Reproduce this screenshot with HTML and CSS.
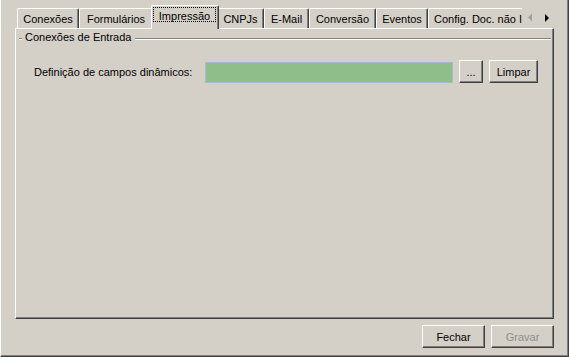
FILE: index.html
```html
<!DOCTYPE html>
<html lang="pt">
<head>
<meta charset="utf-8">
<title>Configurações</title>
<link rel="stylesheet" href="styles.css">
</head>
<body>
<div class="window">
  <div class="tabstrip">
    <div class="tabs">
      <div class="tab w-conexoes">Conexões</div>
      <div class="tab w-form">Formulários</div>
      <div class="tab tab-active"><span class="focus">Impressão</span></div>
      <div class="tab w-cnpj">CNPJs</div>
      <div class="tab w-email">E-Mail</div>
      <div class="tab w-conv">Conversão</div>
      <div class="tab w-event">Eventos</div>
      <div class="tab tab-last">Config. Doc. não Integrados</div>
    </div>
    <div class="scroller">
      <svg width="32" height="24" viewBox="0 0 32 24">
        <polygon points="6,12.5 10,8.5 10,16.5" fill="#a0a0a0"/>
        <polygon points="23,9 23,17 27,13" fill="#000"/>
      </svg>
    </div>
  </div>
  <div class="panel">
    <div class="group-head">
      <span class="etch dash"></span>
      <span class="group-title">Conexões de Entrada</span>
      <span class="etch fill"></span>
    </div>
    <div class="field-row">
      <span class="field-label">Definição de campos dinâmicos:</span>
      <div class="field-input"></div>
      <button class="btn btn-browse">...</button>
      <button class="btn btn-clear">Limpar</button>
    </div>
  </div>
  <div class="footer">
    <button class="btn btn-foot">Fechar</button>
    <button class="btn btn-foot btn-disabled">Gravar</button>
  </div>
</div>
</body>
</html>
```

FILE: styles.css
```css
* { box-sizing: border-box; }
html, body { margin: 0; }
body {
  background: #d4d0c8;
  font-family: "Liberation Sans", Arial, sans-serif;
  font-size: 11px;
  color: #000;
}
.window {
  width: 569px;
  height: 357px;
  border-left: 1px solid #fff;
  border-right: 1px solid #404040;
  border-bottom: 1px solid #404040;
  box-shadow: inset -1px -1px 0 #808080;
  padding: 5px 14px 0 14px;
  display: flex;
  flex-direction: column;
}
.tabstrip {
  display: flex;
  height: 24px;
  margin-left: 2px;
  margin-bottom: -1px;
  position: relative;
  z-index: 1;
  flex: none;
}
.tabs {
  display: flex;
  align-items: flex-end;
  width: 505px;
  height: 24px;
  overflow: hidden;
  flex: none;
}
.tab {
  flex: none;
  height: 20px;
  margin-bottom: 1px;
  border-top: 1px solid #fff;
  border-left: 1px solid #fff;
  border-right: 1px solid #404040;
  box-shadow: inset -1px 0 0 #808080;
  border-radius: 2px 2px 0 0;
  background: #d4d0c8;
  text-align: center;
  padding-top: 3px;
  line-height: 14px;
  white-space: nowrap;
}
.w-conexoes { width: 62px; }
.w-form { width: 74px; }
.w-cnpj { width: 47px; }
.w-email { width: 45px; }
.w-conv { width: 67px; }
.w-event { width: 52px; }
.tab-last {
  width: 140px;
  text-align: left;
  padding-left: 5px;
}
.tab-active {
  width: 68px;
  height: 24px;
  margin: 0 -2px;
  position: relative;
  z-index: 2;
  padding: 1px 0 0 1px;
  text-align: left;
}
.focus {
  display: block;
  width: 63px;
  height: 15px;
  border: 1px dotted #000;
  padding-top: 2px;
  line-height: 13px;
  text-align: center;
}
.scroller {
  width: 32px;
  height: 24px;
  flex: none;
}
.scroller svg { display: block; }
.panel {
  height: 291px;
  flex: none;
  border: 1px solid;
  border-color: #fff #404040 #404040 #fff;
  box-shadow: inset -1px -1px 0 #808080;
}
.group-head {
  display: flex;
  height: 14px;
  line-height: 14px;
  margin: 1px 2px 0 3px;
}
.etch {
  height: 2px;
  margin-top: 8px;
  border-top: 1px solid #808080;
  border-bottom: 1px solid #fff;
}
.dash { width: 3px; flex: none; }
.group-title { margin: 0 4px 0 3px; white-space: nowrap; }
.fill { flex: 1; }
.field-row {
  display: flex;
  align-items: center;
  height: 23px;
  margin-top: 16px;
  padding-left: 18px;
}
.field-label {
  width: 171px;
  flex: none;
  line-height: 14px;
  white-space: nowrap;
}
.field-input {
  width: 248px;
  height: 21px;
  flex: none;
  align-self: flex-start;
  margin-top: 2px;
  background: #8fbe8b;
  border: 1px solid #a6b9d3;
}
.btn {
  font: inherit;
  color: #000;
  height: 23px;
  padding: 0;
  border: 1px solid;
  border-color: #fff #404040 #404040 #fff;
  box-shadow: inset -1px -1px 0 #808080;
  background: #d4d0c8;
  line-height: 14px;
  flex: none;
}
.btn-browse { width: 24px; margin-left: 6px; }
.btn-clear { width: 49px; margin-left: 6px; }
.footer {
  display: flex;
  justify-content: flex-end;
  gap: 6px;
  margin-top: 6px;
}
.btn-foot { width: 63px; }
.btn-disabled { color: #8d8d8d; }
```
